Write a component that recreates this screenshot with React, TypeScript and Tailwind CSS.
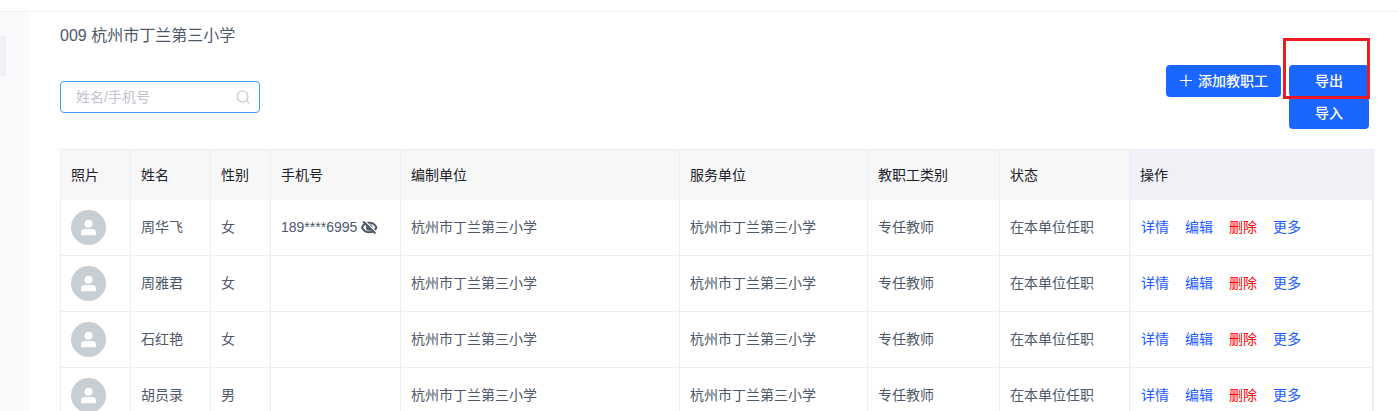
import React from "react";

interface IStaff {
  name: string;
  gender: string;
  phone?: string;
}

const SCHOOL = "杭州市丁兰第三小学";

const staff: IStaff[] = [
  { name: "周华飞", gender: "女", phone: "189****6995" },
  { name: "周雅君", gender: "女" },
  { name: "石红艳", gender: "女" },
  { name: "胡员录", gender: "男" },
];

const columns = [
  { title: "照片", width: "w-[70px]" },
  { title: "姓名", width: "w-[80px]" },
  { title: "性别", width: "w-[60px]" },
  { title: "手机号", width: "w-[130px]" },
  { title: "编制单位", width: "" },
  { title: "服务单位", width: "w-[188px]" },
  { title: "教职工类别", width: "w-[132px]" },
  { title: "状态", width: "w-[130px]" },
  { title: "操作", width: "w-[243px]" },
];

const SearchIcon = () => (
  <svg
    viewBox="0 0 14 14"
    className="size-3.5 shrink-0 text-[#c0c4cc]"
    fill="none"
    stroke="currentColor"
    aria-hidden="true"
  >
    <circle cx="6.5" cy="6.5" r="5.5" strokeWidth="1.1" />
    <path d="M10.6 10.6l2.2 2.2" strokeWidth="1.1" strokeLinecap="round" />
  </svg>
);

const PlusIcon = () => (
  <svg
    viewBox="0 0 14 14"
    className="size-3.5"
    fill="none"
    stroke="currentColor"
    aria-hidden="true"
  >
    <path d="M1 6.5h12M7 0.5v12" strokeWidth="1.2" />
  </svg>
);

const EyeOffIcon = () => (
  <svg viewBox="0 0 18 16" className="h-4 w-[18px]" fill="none" aria-hidden="true">
    <path
      d="M2 8.5C3.4 5.4 5.9 3.7 9.2 3.7S15 5.4 16.4 8.5C15 11.6 12.5 13.3 9.2 13.3S3.4 11.6 2 8.5z"
      stroke="#4e5969"
      strokeWidth="2"
    />
    <circle cx="9.2" cy="8.5" r="3.2" fill="#4e5969" />
    <path d="M4.6 1.8L16.8 13.8" stroke="#fff" strokeWidth="1.3" />
    <path d="M3.2 2.5L15.4 14.5" stroke="#4e5969" strokeWidth="2" />
  </svg>
);

const Avatar = () => (
  <svg viewBox="0 0 35 35" className="block size-[35px]" aria-hidden="true">
    <circle cx="17.5" cy="17.5" r="17.5" fill="#c9cdd4" />
    <circle cx="17.5" cy="13.8" r="4" fill="#fff" />
    <path
      d="M10 23a4 4 0 0 1 4-4h7a4 4 0 0 1 4 4v1.2a1 1 0 0 1-1 1H11a1 1 0 0 1-1-1z"
      fill="#fff"
    />
  </svg>
);

interface CellProps {
  className?: string;
  children?: React.ReactNode;
}

const Cell: React.FC<CellProps> = ({ className = "pb-0.5", children }) => (
  <td
    className={`h-14 border-r border-b border-[#ebeef5] px-2.5 whitespace-nowrap ${className}`}
  >
    {children}
  </td>
);

const App: React.FC = () => {
  return (
    <div className="flex h-screen flex-col overflow-hidden bg-white font-['Liberation_Sans','Noto_Sans_CJK_SC',sans-serif] text-sm text-[#4e5969]">
      <header className="h-3 shrink-0 border-b border-[#f0f0f0]" />

      <div className="flex min-h-0 flex-1">
        {/* Sidebar */}
        <aside className="w-[30px] shrink-0 bg-[#f9fafc] pt-6">
          <div className="h-10 w-1.5 bg-[#f0f1f5]" />
        </aside>

        <main className="min-w-0 flex-1 pt-3 pr-6 pl-[30px]">
          <h1 className="text-base leading-6">009 {SCHOOL}</h1>

          {/* Toolbar */}
          <div className="mt-[17px] flex items-start justify-between pr-[5px]">
            <label className="mt-4 flex h-8 w-[200px] items-center rounded border border-[#409eff] pr-[9px] pl-[15px]">
              <input
                type="text"
                aria-label="姓名/手机号"
                placeholder="姓名/手机号"
                className="min-w-0 flex-1 outline-none placeholder:text-[#c0c4cc]"
              />
              <SearchIcon />
            </label>

            <div className="flex items-start gap-2">
              <button
                type="button"
                className="flex h-8 items-center gap-[5px] rounded bg-[#1b66ff] px-[13px] font-medium text-white"
              >
                <PlusIcon />
                添加教职工
              </button>
              <div className="relative flex w-20 flex-col">
                <button
                  type="button"
                  className="h-8 rounded bg-[#1b66ff] font-medium text-white"
                >
                  导出
                </button>
                <button
                  type="button"
                  className="h-8 rounded bg-[#1b66ff] font-medium text-white"
                >
                  导入
                </button>
                {/* Highlight around the export button */}
                <div className="pointer-events-none absolute -top-[27px] -right-px -left-1.5 h-[61px] border-3 border-[#ed1c24]" />
              </div>
            </div>
          </div>

          {/* Staff table */}
          <div className="mt-5 border-t border-r border-l border-[#ebeef5]">
            <table className="w-full table-fixed border-separate border-spacing-0 text-left">
              <thead className="text-[#1d2129]">
                <tr>
                  {columns.map((col) => (
                    <th
                      key={col.title}
                      className={`h-[50px] border-r border-[#ebeef5] bg-[#f7f7f7] px-2.5 font-normal last:bg-[#f0f1f6] ${col.width}`}
                    >
                      {col.title}
                    </th>
                  ))}
                </tr>
              </thead>
              <tbody>
                {staff.map((row) => (
                  <tr key={row.name}>
                    <Cell className="py-0">
                      <Avatar />
                    </Cell>
                    <Cell>{row.name}</Cell>
                    <Cell>{row.gender}</Cell>
                    <Cell>
                      {row.phone && (
                        <span className="flex items-center gap-[3px]">
                          {row.phone}
                          <EyeOffIcon />
                        </span>
                      )}
                    </Cell>
                    <Cell>{SCHOOL}</Cell>
                    <Cell>{SCHOOL}</Cell>
                    <Cell>专任教师</Cell>
                    <Cell>在本单位任职</Cell>
                    <Cell>
                      <div className="flex gap-4 pl-px text-[#1b5cff]">
                        <a href="#detail">详情</a>
                        <a href="#edit">编辑</a>
                        <a href="#delete" className="text-[#ff0000]">
                          删除
                        </a>
                        <a href="#more">更多</a>
                      </div>
                    </Cell>
                  </tr>
                ))}
              </tbody>
            </table>
          </div>
        </main>
      </div>
    </div>
  );
};

export default App;
